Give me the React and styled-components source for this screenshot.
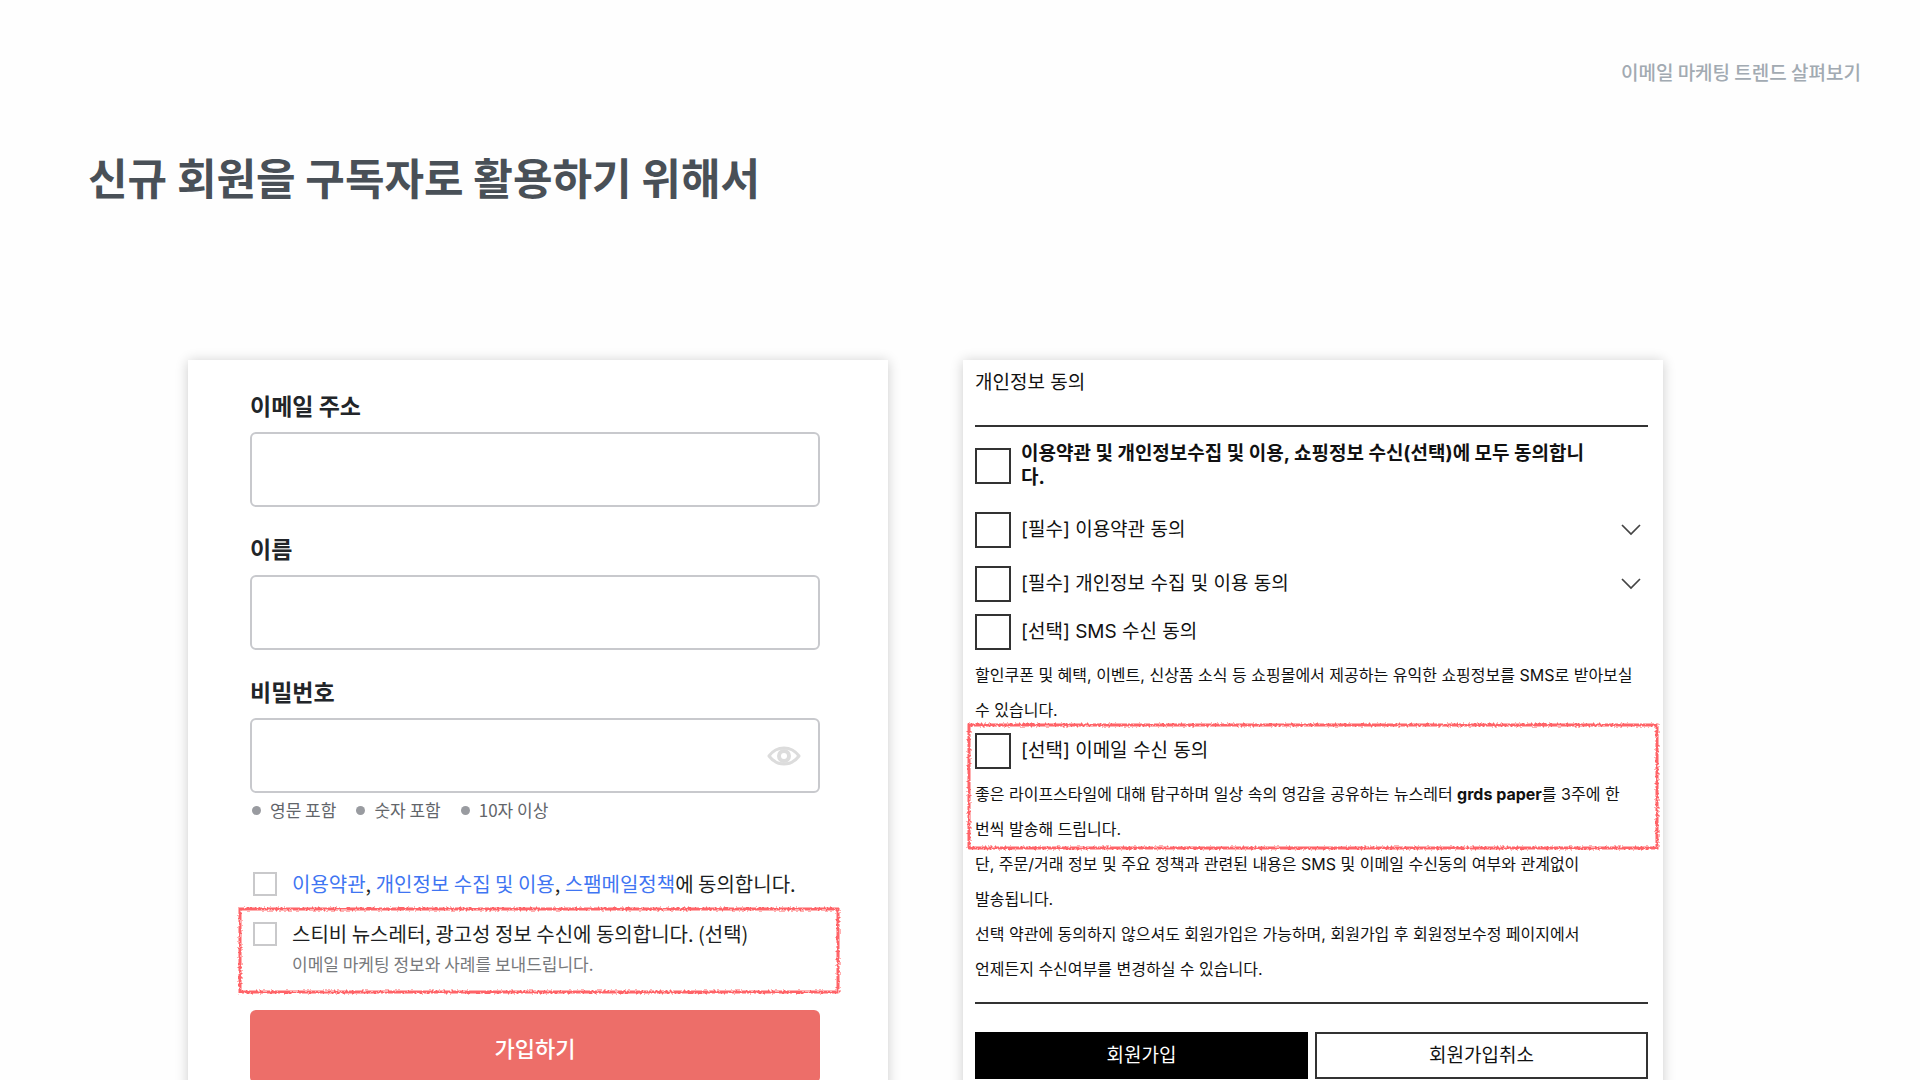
import React from "react"
import styled, { createGlobalStyle } from "styled-components"

const terms = [
  { id: "terms", text: "[필수] 이용약관 동의" },
  { id: "privacy", text: "[필수] 개인정보 수집 및 이용 동의" },
]

const hints = ["영문 포함", "숫자 포함", "10자 이상"]

const PencilBox = ({ seed }) => (
  <PencilSvg aria-hidden="true">
    <filter id={`pencil-${seed}`} x="-5%" y="-5%" width="110%" height="110%">
      <feTurbulence
        type="fractalNoise"
        baseFrequency="0.5"
        numOctaves="2"
        seed={seed}
      />
      <feDisplacementMap
        in="SourceGraphic"
        scale="4"
        xChannelSelector="R"
        yChannelSelector="G"
      />
    </filter>
    <rect width="100%" height="100%" filter={`url(#pencil-${seed})`} />
  </PencilSvg>
)

const Eye = () => (
  <svg width="34" height="20" viewBox="0 0 34 20" fill="none">
    <path
      d="M2 10C6 4.500 11 2 17 2s11 2.500 15 8c-4 5.500-9 8-15 8S6 15.500 2 10z"
      stroke="#dcdcdc"
      strokeWidth="3"
      strokeLinejoin="round"
    />
    <circle cx="17" cy="10" r="5" stroke="#dcdcdc" strokeWidth="4" />
  </svg>
)

const Chevron = () => (
  <svg width="20" height="12" viewBox="0 0 20 12" fill="none">
    <path d="M1 1l9 9 9-9" stroke="#444" strokeWidth="1.700" />
  </svg>
)

const SignupForm = () => (
  <SignupPanel>
    <Field>
      <FieldLabel htmlFor="email">이메일 주소</FieldLabel>
      <InputBox>
        <TextInput id="email" type="email" />
      </InputBox>
    </Field>
    <Field>
      <FieldLabel htmlFor="name">이름</FieldLabel>
      <InputBox>
        <TextInput id="name" type="text" />
      </InputBox>
    </Field>
    <Field>
      <FieldLabel htmlFor="password">비밀번호</FieldLabel>
      <InputBox>
        <TextInput id="password" type="password" />
        <EyeButton type="button" aria-label="비밀번호 표시">
          <Eye />
        </EyeButton>
      </InputBox>
    </Field>
    <Hints>
      {hints.map(hint => (
        <Hint key={hint}>{hint}</Hint>
      ))}
    </Hints>
    <AgreeRow>
      <SmallCheck id="agree" type="checkbox" />
      <AgreeLabel htmlFor="agree">
        <a href="#">이용약관</a>, <a href="#">개인정보 수집 및 이용</a>,{" "}
        <a href="#">스팸메일정책</a>에 동의합니다.
      </AgreeLabel>
    </AgreeRow>
    <NewsHighlight>
      <PencilBox seed={3} />
      <AgreeRow>
        <SmallCheck id="news" type="checkbox" />
        <AgreeLabel htmlFor="news">
          스티비 뉴스레터, 광고성 정보 수신에 동의합니다. (선택)
        </AgreeLabel>
      </AgreeRow>
      <AgreeNote>이메일 마케팅 정보와 사례를 보내드립니다.</AgreeNote>
    </NewsHighlight>
    <JoinButton type="submit">가입하기</JoinButton>
  </SignupPanel>
)

const ConsentForm = () => (
  <ConsentPanel>
    <ConsentTitle>개인정보 동의</ConsentTitle>
    <Divider />
    <AllRow>
      <BigCheck id="all" type="checkbox" />
      <AllLabel htmlFor="all">
        이용약관 및 개인정보수집 및 이용, 쇼핑정보 수신(선택)에 모두 동의합니다.
      </AllLabel>
    </AllRow>
    <TermList>
      {terms.map(term => (
        <TermRow key={term.id}>
          <BigCheck id={term.id} type="checkbox" />
          <TermLabel htmlFor={term.id}>{term.text}</TermLabel>
          <MoreButton type="button" aria-label="약관 보기">
            <Chevron />
          </MoreButton>
        </TermRow>
      ))}
    </TermList>
    <TermRow>
      <BigCheck id="sms" type="checkbox" />
      <TermLabel htmlFor="sms">[선택] SMS 수신 동의</TermLabel>
    </TermRow>
    <SmsNote>
      할인쿠폰 및 혜택, 이벤트, 신상품 소식 등 쇼핑몰에서 제공하는 유익한
      쇼핑정보를 SMS로 받아보실
      <br />수 있습니다.
    </SmsNote>
    <MailHighlight>
      <PencilBox seed={8} />
      <TermRow>
        <BigCheck id="mail" type="checkbox" />
        <TermLabel htmlFor="mail">[선택] 이메일 수신 동의</TermLabel>
      </TermRow>
      <Note>
        좋은 라이프스타일에 대해 탐구하며 일상 속의 영감을 공유하는 뉴스레터{" "}
        <b>grds paper</b>를 3주에 한
        <br />
        번씩 발송해 드립니다.
      </Note>
    </MailHighlight>
    <Note>
      단, 주문/거래 정보 및 주요 정책과 관련된 내용은 SMS 및 이메일 수신동의
      여부와 관계없이
      <br />
      발송됩니다.
    </Note>
    <Note>
      선택 약관에 동의하지 않으셔도 회원가입은 가능하며, 회원가입 후
      회원정보수정 페이지에서
      <br />
      언제든지 수신여부를 변경하실 수 있습니다.
    </Note>
    <BottomDivider />
    <ButtonRow>
      <ConsentButton type="submit" $filled>
        회원가입
      </ConsentButton>
      <ConsentButton type="button">회원가입취소</ConsentButton>
    </ButtonRow>
  </ConsentPanel>
)

const App = () => {
  return (
    <Slide>
      <GlobalStyle />
      <Chapter>이메일 마케팅 트렌드 살펴보기</Chapter>
      <Title>신규 회원을 구독자로 활용하기 위해서</Title>
      <Panels>
        <SignupForm />
        <ConsentForm />
      </Panels>
    </Slide>
  )
}

export default App

const GlobalStyle = createGlobalStyle`
  * {
    box-sizing: border-box;
  }
  body {
    margin: 0;
    background: #fefefe;
    font-family: "Noto Sans CJK KR", sans-serif;
  }
  button,
  input {
    font-family: inherit;
  }
`

const Slide = styled.main`
  display: flex;
  flex-direction: column;
  height: 100vh;
  overflow: hidden;
`

const Chapter = styled.p`
  margin: 0;
  padding: 58px 59px 0 0;
  color: #a2aab2;
  font-size: 19px;
  font-weight: 500;
  line-height: 28px;
  text-align: right;
`

const Title = styled.h1`
  margin: 0;
  padding: 60px 88px 0;
  color: #495057;
  font-size: 43px;
  font-weight: 700;
  line-height: 60px;
`

const Panels = styled.div`
  display: grid;
  grid-template-columns: 1fr 1fr;
  gap: 75px;
  align-items: start;
  padding: 154px 257px 0 188px;
`

const Panel = styled.form`
  background: #fff;
  box-shadow: 0 1px 12px rgba(0, 0, 0, 0.2);
`

const SignupPanel = styled(Panel)`
  padding: 28px 68px 60px 62px;
`

const Field = styled.div`
  margin-bottom: 24px;
`

const FieldLabel = styled.label`
  display: block;
  margin-bottom: 10px;
  color: #222529;
  font-size: 23px;
  font-weight: 700;
  line-height: 34px;
`

const InputBox = styled.div`
  display: flex;
  align-items: center;
  height: 75px;
  padding-right: 17px;
  border: 2px solid #c8c9cd;
  border-radius: 6px;
`

const TextInput = styled.input`
  flex: 1;
  min-width: 0;
  height: 100%;
  padding: 0 18px;
  border: 0;
  outline: 0;
  background: transparent;
  font-size: 20px;
`

const EyeButton = styled.button`
  display: flex;
  padding: 0;
  border: 0;
  background: none;
`

const Hints = styled.ul`
  display: flex;
  gap: 20px;
  margin: -20px 0 46px;
  padding: 0 0 0 2px;
  list-style: none;
`

const Hint = styled.li`
  display: flex;
  align-items: center;
  gap: 9px;
  color: #62656a;
  font-size: 17px;
  line-height: 26px;

  &::before {
    content: "";
    width: 9px;
    height: 9px;
    border-radius: 50%;
    background: #999ba0;
  }
`

const AgreeRow = styled.div`
  display: flex;
  align-items: center;
  gap: 15px;
  padding-left: 3px;
`

const SmallCheck = styled.input`
  appearance: none;
  flex: none;
  width: 24px;
  height: 24px;
  margin: 0;
  border: 2px solid #c9c9cb;
  background: #fff;
`

const AgreeLabel = styled.label`
  color: #1d1f22;
  font-size: 20px;
  line-height: 30px;

  a {
    color: #3f75f2;
    text-decoration: none;
  }
`

const NewsHighlight = styled.div`
  position: relative;
  margin: 10px -18px 18px -10px;
  padding: 10px 18px 15px 10px;
`

const AgreeNote = styled.p`
  margin: 2px 0 0 42px;
  color: #77797c;
  font-size: 17px;
  line-height: 26px;
`

const PencilSvg = styled.svg`
  position: absolute;
  inset: 0;
  width: 100%;
  height: 100%;
  overflow: visible;
  pointer-events: none;

  rect {
    fill: none;
    stroke: #ff6467;
    stroke-width: 3px;
  }
`

const JoinButton = styled.button`
  width: 100%;
  height: 73px;
  border: 0;
  border-radius: 6px;
  background: #ed6e69;
  color: #fff;
  font-size: 22px;
  font-weight: 500;
`

const ConsentPanel = styled(Panel)`
  padding: 9px 15px 40px 12px;
  color: #111;
  font-family: Inter, "Noto Sans CJK KR", sans-serif;
`

const ConsentTitle = styled.h2`
  margin: 0;
  font-size: 19px;
  font-weight: 400;
  line-height: 28px;
`

const Divider = styled.hr`
  height: 2px;
  margin: 28px 0 0;
  border: 0;
  background: #333;
`

const BottomDivider = styled(Divider)`
  margin-top: 15px;
`

const AllRow = styled.div`
  display: flex;
  align-items: center;
  gap: 10px;
  padding: 15px 55px 0 0;
`

const BigCheck = styled.input`
  appearance: none;
  flex: none;
  width: 36px;
  height: 36px;
  margin: 0;
  border: 2px solid #333;
  background: #fff;
`

const AllLabel = styled.label`
  font-size: 19px;
  font-weight: 700;
  line-height: 24px;
`

const TermList = styled.div`
  display: flex;
  flex-direction: column;
  gap: 18px;
  margin: 22px 0 12px;
`

const TermRow = styled.div`
  display: flex;
  align-items: center;
  gap: 10px;
`

const TermLabel = styled.label`
  flex: 1;
  font-size: 19px;
  line-height: 36px;
`

const MoreButton = styled.button`
  display: flex;
  margin-right: 7px;
  padding: 0;
  border: 0;
  background: none;
`

const Note = styled.p`
  margin: 0;
  font-size: 16px;
  line-height: 35px;
`

const SmsNote = styled(Note)`
  margin-top: 8px;
`

const MailHighlight = styled.div`
  position: relative;
  margin: -3px -9px -1px -6px;
  padding: 8px 0 1px 6px;

  p {
    margin-top: 8px;
  }
`

const ButtonRow = styled.div`
  display: grid;
  grid-template-columns: 1fr 1fr;
  gap: 7px;
  margin-top: 28px;
`

const ConsentButton = styled.button`
  height: 47px;
  padding: 0 0 4px;
  border: 2px solid ${props => (props.$filled ? "#000" : "#333")};
  background: ${props => (props.$filled ? "#000" : "#fff")};
  color: ${props => (props.$filled ? "#fff" : "#111")};
  font-size: 19px;
`
